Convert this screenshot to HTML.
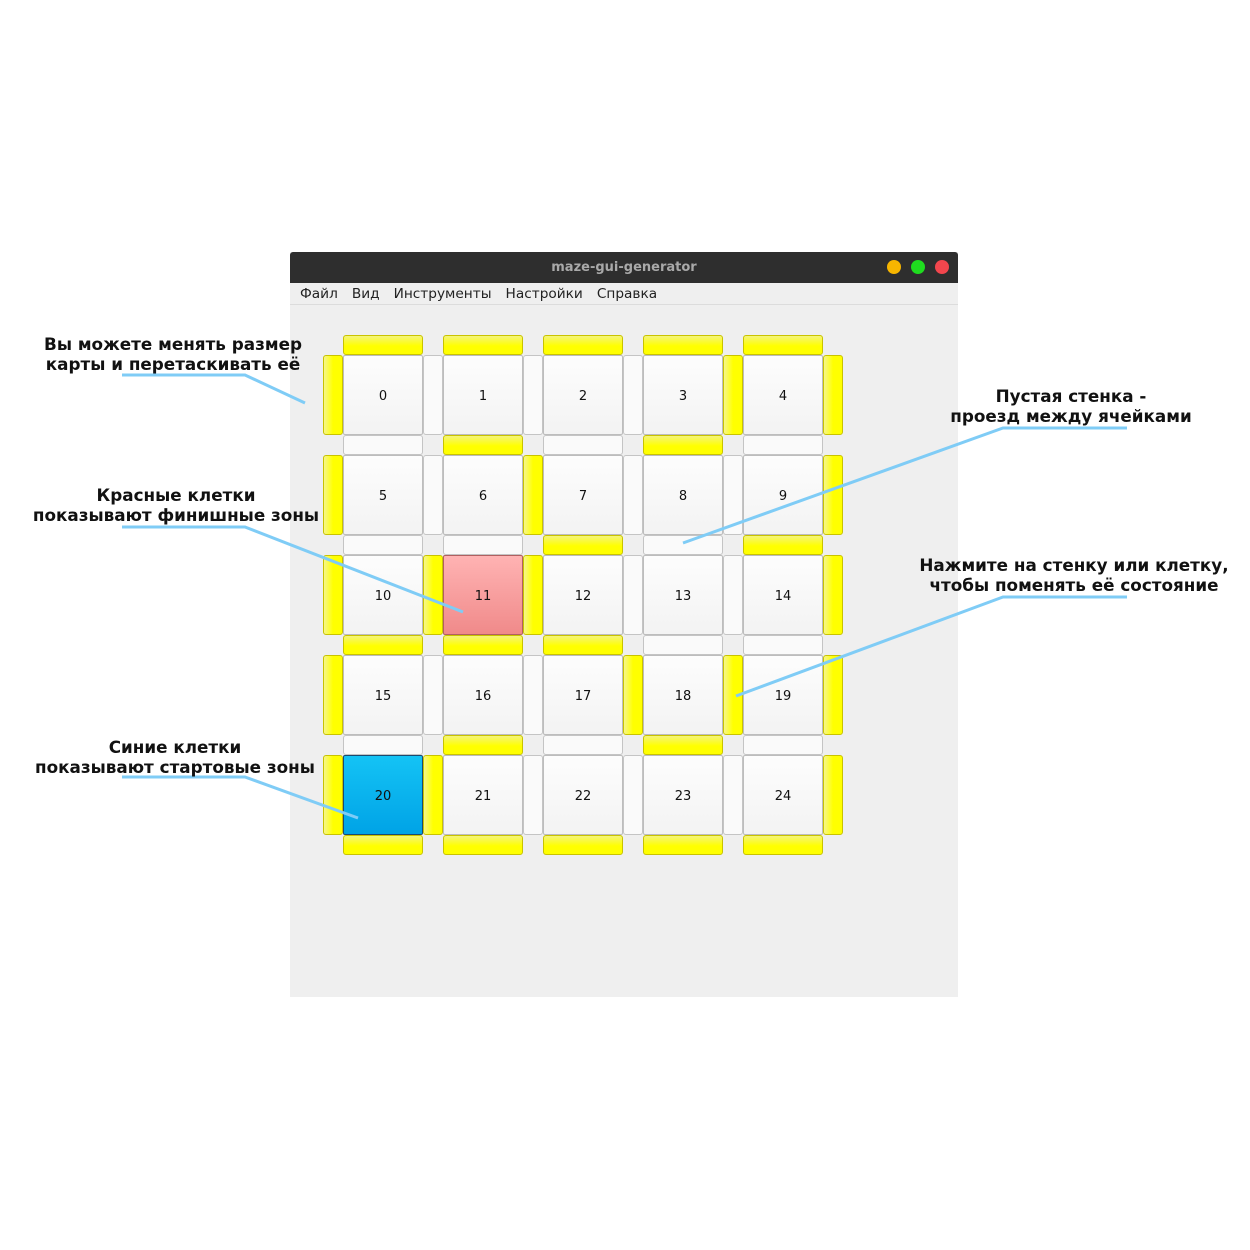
<!DOCTYPE html>
<html><head><meta charset="utf-8"><style>
body{margin:0;width:1250px;height:1250px;background:#fff;position:relative;overflow:hidden;font-family:"Liberation Sans","DejaVu Sans",sans-serif}
.win{position:absolute;left:290px;top:252px;width:668px;height:745px;background:#efefef}
.title{position:absolute;left:0;top:0;width:668px;height:31px;background:#2e2e2e;border-radius:3px 3px 0 0;color:#a9a9a9;font-weight:bold;font-size:13px;text-align:center;line-height:32px;font-family:"DejaVu Sans",sans-serif}
.dot{position:absolute;top:8px;width:14px;height:14px;border-radius:50%}
.menu{position:absolute;left:0;top:31px;width:668px;height:21px;border-bottom:1px solid #dcdcdc;font-family:"DejaVu Sans",sans-serif;font-size:13.7px;color:#222;line-height:22px}
.menu span{margin-left:10px;margin-right:4px}
.c{position:absolute;width:78px;height:78px;border:1px solid #bdbdbd;border-radius:2px;background:linear-gradient(#fdfdfd,#f3f3f3);font-size:13px;text-align:center;line-height:82px;color:#111;font-family:"DejaVu Sans",sans-serif}
.h,.v{position:absolute;border:1px solid #c4c4c4;border-radius:3px;background:#fafafa;box-sizing:border-box}
.h{width:80px;height:20px}.v{width:20px;height:80px}
.y{background:linear-gradient(#f4f47a,#ffff00 55%);border-color:#c9c300}
.v.y{background:linear-gradient(90deg,#f7f78a,#ffff00 50%)}
.t{position:absolute;font-family:"DejaVu Sans",sans-serif;font-weight:bold;font-size:16.8px;color:#111;text-align:center;line-height:20px;white-space:nowrap;transform:translateX(-50%)}
</style></head><body>
<div class="win">
<div class="title">maze-gui-generator
<div class="dot" style="left:597px;background:#f7b500"></div>
<div class="dot" style="left:621px;background:#1fdc1f"></div>
<div class="dot" style="left:645px;background:#f2464d"></div></div>
<div class="menu"><span>Файл</span><span>Вид</span><span>Инструменты</span><span>Настройки</span><span>Справка</span></div>
</div>
<div id="g"></div>
<svg style="position:absolute;left:0;top:0" width="1250" height="1250" fill="none" stroke="#7fccf6" stroke-width="3">
<polyline points="122,375 245,375 305,403"/>
<polyline points="122,527 245,527 463,612"/>
<polyline points="122,777 245,777 358,818"/>
<polyline points="1127,428 1003,428 683,543"/>
<polyline points="1127,597 1003,597 736,696"/>
</svg>
<div class="t" style="left:173px;top:334px">Вы можете менять размер<br>карты и перетаскивать её</div>
<div class="t" style="left:176px;top:485px">Красные клетки<br>показывают финишные зоны</div>
<div class="t" style="left:175px;top:737px">Синие клетки<br>показывают стартовые зоны</div>
<div class="t" style="left:1071px;top:386px">Пустая стенка -<br>проезд между ячейками</div>
<div class="t" style="left:1074px;top:555px">Нажмите на стенку или клетку,<br>чтобы поменять её состояние</div>
<script>
var H=[[1,1,1,1,1],[0,1,0,1,0],[0,0,1,0,1],[1,1,1,0,0],[0,1,0,1,0],[1,1,1,1,1]];
var V=[[1,0,0,0,1,1],[1,0,1,0,0,1],[1,1,1,0,0,1],[1,0,0,1,1,1],[1,1,0,0,0,1]];
var s='';
for(var r=0;r<6;r++)for(var c=0;c<5;c++)s+='<div class="h'+(H[r][c]?' y':'')+'" style="left:'+(343+100*c)+'px;top:'+(335+100*r)+'px"></div>';
for(var r=0;r<5;r++)for(var i=0;i<6;i++)s+='<div class="v'+(V[r][i]?' y':'')+'" style="left:'+(323+100*i)+'px;top:'+(355+100*r)+'px"></div>';
for(var r=0;r<5;r++)for(var c=0;c<5;c++){var n=r*5+c,st='';
if(n==11)st='background:linear-gradient(#ffb3b3,#f08a8a);border-color:#b06060;';
if(n==20)st='background:linear-gradient(#14c3f5,#00a3e6);border-color:#1a4a70;';
s+='<div class="c" style="'+st+'left:'+(343+100*c)+'px;top:'+(355+100*r)+'px">'+n+'</div>';}
document.getElementById('g').innerHTML=s;
</script>
</body></html>
